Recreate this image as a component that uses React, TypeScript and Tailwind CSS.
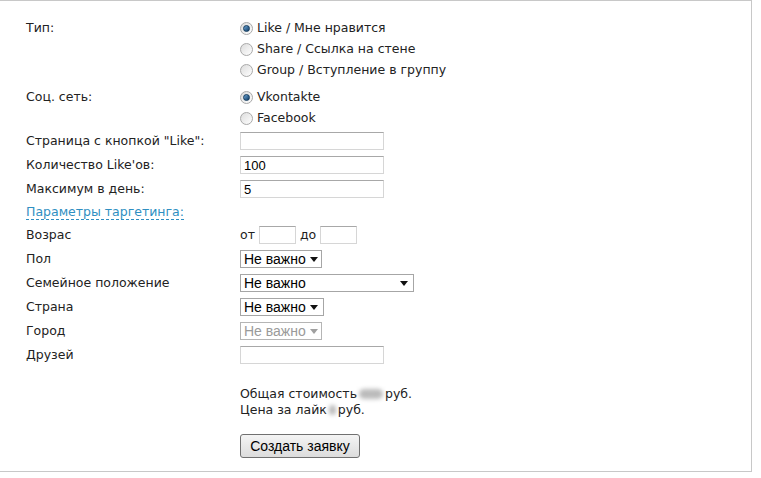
import React from "react";

const font = { fontFamily: '"DejaVu Sans", Verdana, sans-serif' };
const arial = { fontFamily: '"Liberation Sans", Arial, sans-serif' };

function Radio({ checked }: { checked?: boolean }) {
    return (
        <span className="relative inline-flex w-[13px] h-[13px] rounded-full border border-[#a9a9a9] bg-gradient-to-br from-[#dcdcdc] to-[#ffffff] items-center justify-center mr-[4px] shrink-0">
            {checked && (
                <span className="w-[7px] h-[7px] rounded-full bg-gradient-to-br from-[#6ea6d6] to-[#0d3d66] border border-[#123a5c]" />
            )}
        </span>
    );
}

function RadioRow({ checked, label }: { checked?: boolean; label: string }) {
    return (
        <div className="h-[21px] flex items-center whitespace-nowrap">
            <Radio checked={checked} />
            <span>{label}</span>
        </div>
    );
}

function TextInput({ value = "", w = "w-[144px]" }: { value?: string; w?: string }) {
    return (
        <div
            className={`${w} shrink-0 h-[18px] border border-[#d6d6d6] border-t-[#a8a8a8] bg-white text-[13px] text-black flex items-center pl-[3px] leading-none`}
            style={arial}
        >
            {value}
        </div>
    );
}

function Select({ w, disabled, gap }: { w: string; disabled?: boolean; gap?: boolean }) {
    return (
        <div
            className={`${w} shrink-0 h-[18px] border ${disabled ? "border-[#b5b5b5]" : "border-[#a6a6a6]"} bg-white flex items-center pl-[3px] pr-[5px] text-[14px] leading-none whitespace-nowrap overflow-hidden ${disabled ? "text-[#9a9a9a]" : "text-black"} ${gap ? "justify-between" : "gap-[4px]"}`}
            style={arial}
        >
            <span>Не важно</span>
            <svg width="8" height="5" viewBox="0 0 8 5" className="shrink-0">
                <path d="M0 0h8L4 5z" fill={disabled ? "#a0a0a0" : "#111"} />
            </svg>
        </div>
    );
}

function Row({ label, children, h = "h-6" }: { label: React.ReactNode; children?: React.ReactNode; h?: string }) {
    return (
        <div className={`${h} flex items-center`}>
            <div className="w-[214px] shrink-0 whitespace-nowrap">{label}</div>
            <div className="flex items-center">{children}</div>
        </div>
    );
}

export default function App() {
    return (
        <div className="w-[761px] h-[478px] bg-white">
            <div
                className="w-[752px] h-[472px] border-t border-r border-b border-[#c8c8c8] pl-[26px] pt-[17px] text-[12.5px] text-[#222]"
                style={font}
            >
                {/* Тип */}
                <div className="flex">
                    <div className="w-[214px] shrink-0 pt-[1px]">Тип:</div>
                    <div>
                        <RadioRow checked label="Like / Мне нравится" />
                        <RadioRow label="Share / Ссылка на стене" />
                        <RadioRow label="Group / Вступление в группу" />
                    </div>
                </div>

                {/* Соц. сеть */}
                <div className="flex mt-[6px]">
                    <div className="w-[214px] shrink-0 pt-[1px]">Соц. сеть:</div>
                    <div>
                        <RadioRow checked label="Vkontakte" />
                        <RadioRow label="Facebook" />
                    </div>
                </div>

                <Row label='Страница с кнопкой "Like":'>
                    <TextInput />
                </Row>
                <Row label="Количество Like'ов:">
                    <TextInput value="100" />
                </Row>
                <Row label="Максимум в день:">
                    <TextInput value="5" />
                </Row>
                <div className="h-[22px] flex items-center">
                    <span className="text-[#2f8fc2] border-b border-dashed border-[#2f8fc2] leading-[14px]">
                        Параметры таргетинга:
                    </span>
                </div>
                <Row label="Возрас">
                    <span className="mr-[4px]">от</span>
                    <TextInput w="w-[37px]" />
                    <span className="ml-[4px] mr-[4px]">до</span>
                    <TextInput w="w-[37px]" />
                </Row>
                <Row label="Пол">
                    <Select w="w-[82px]" />
                </Row>
                <Row label="Семейное положение">
                    <Select w="w-[174px]" gap />
                </Row>
                <Row label="Страна">
                    <Select w="w-[84px]" gap />
                </Row>
                <Row label="Город">
                    <Select w="w-[82px]" disabled />
                </Row>
                <Row label="Друзей">
                    <TextInput />
                </Row>

                <div className="ml-[214px] mt-[19px] leading-[16px]">
                    <div className="flex items-center">
                        Общая стоимость
                        <span className="inline-block w-[24px] h-[10px] mx-[2px] rounded-full bg-[#bbbbbb] blur-[2px]" />
                        руб.
                    </div>
                    <div className="flex items-center">
                        Цена за лайк
                        <span className="inline-block w-[7px] h-[10px] mx-[2px] rounded-full bg-[#bbbbbb] blur-[2px]" />
                        руб.
                    </div>
                </div>

                <div className="ml-[214px] mt-[16px]">
                    <button
                        className="w-[120px] h-[24px] border border-[#707070] rounded-[3px] bg-gradient-to-b from-[#f4f4f4] to-[#dcdcdc] text-[14px] text-black leading-none"
                        style={arial}
                    >
                        Создать заявку
                    </button>
                </div>
            </div>
        </div>
    );
}
